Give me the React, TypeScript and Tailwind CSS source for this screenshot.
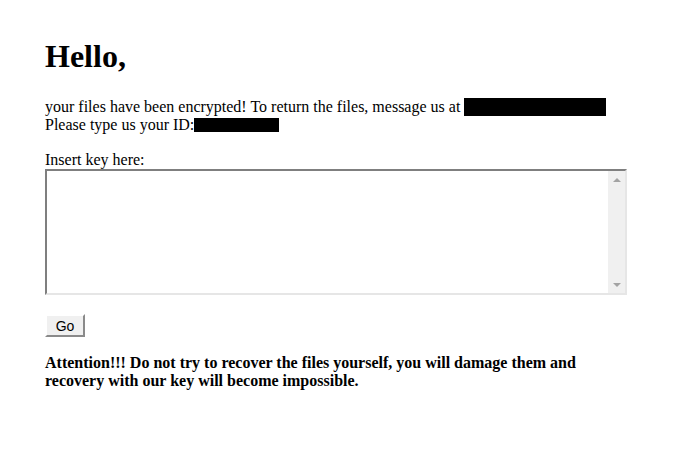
import { useState } from 'react';

const serif = { fontFamily: '"Liberation Serif", "Times New Roman", serif' };

export default function App() {
  const [key, setKey] = useState('');

  return (
    <div className="min-h-[458px] bg-white text-black" style={serif}>
      <div className="w-[582px] pl-[45px] pt-[38px] box-content">
        <h1 className="text-[32px] font-bold leading-[37px]">Hello,</h1>

        {/* Message */}
        <p className="mt-[23px] text-[16px] leading-[18px]">
          your files have been encrypted! To return the files, message us at{' '}
          <span className="inline-block w-[142px] h-[18px] bg-black align-[-4px]" />
          <br />
          Please type us your ID:
          <span className="inline-block w-[85px] h-[14px] bg-black align-[-2px]" />
        </p>

        <div className="mt-[16px] text-[16px] leading-[19px]">Insert key here:</div>

        {/* Key box */}
        <div className="flex w-[582px] h-[126px] border-2 border-t-[#7f7f7f] border-l-[#7f7f7f] border-r-[#e6e6e6] border-b-[#e6e6e6] bg-white">
          <textarea
            value={key}
            onChange={(e) => setKey(e.target.value)}
            className="flex-1 resize-none outline-none p-[2px] text-[13px]"
            style={{ fontFamily: '"Liberation Mono", monospace' }}
          />
          <div className="w-[17px] h-full bg-[#f0f0f0] flex flex-col justify-between items-center">
            <div className="h-[17px] flex items-center justify-center">
              <span className="w-0 h-0 border-l-[4px] border-r-[4px] border-b-[4px] border-l-transparent border-r-transparent border-b-[#a3a3a3]" />
            </div>
            <div className="h-[17px] flex items-center justify-center">
              <span className="w-0 h-0 border-l-[4px] border-r-[4px] border-t-[4px] border-l-transparent border-r-transparent border-t-[#a3a3a3]" />
            </div>
          </div>
        </div>

        <button
          className="mt-[19px] block w-[40px] h-[23px] bg-[#f0f0f0] border-2 border-t-[#ffffff] border-l-[#ffffff] border-r-[#8a8a8a] border-b-[#8a8a8a] text-[14px] leading-none text-black"
          style={{ fontFamily: '"Liberation Sans", Arial, sans-serif' }}
        >
          Go
        </button>

        <p className="mt-[17px] text-[16px] font-bold leading-[18px]">
          Attention!!! Do not try to recover the files yourself, you will damage them and recovery
          with our key will become impossible.
        </p>
      </div>
    </div>
  );
}
